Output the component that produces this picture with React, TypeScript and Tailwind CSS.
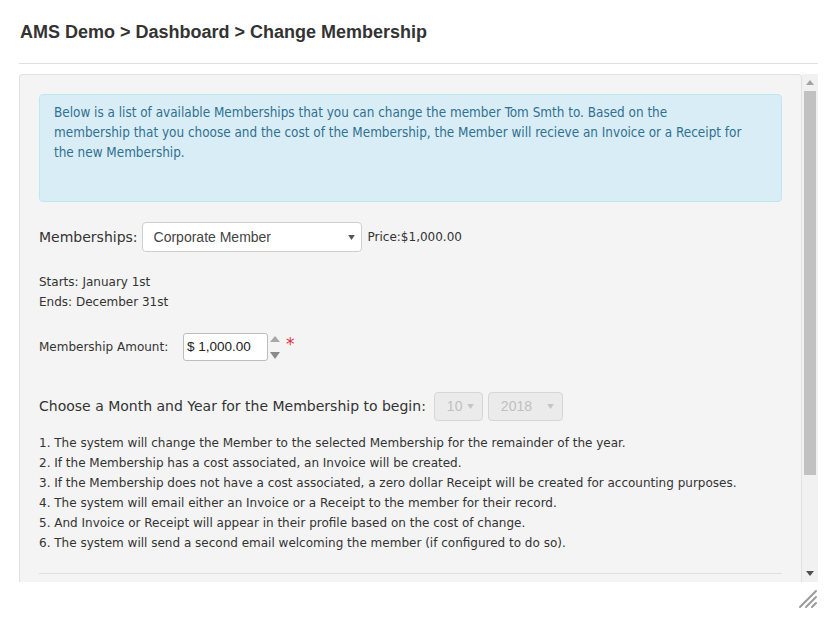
const listItems = [
  "1. The system will change the Member to the selected Membership for the remainder of the year.",
  "2. If the Membership has a cost associated, an Invoice will be created.",
  "3. If the Membership does not have a cost associated, a zero dollar Receipt will be created for accounting purposes.",
  "4. The system will email either an Invoice or a Receipt to the member for their record.",
  "5. And Invoice or Receipt will appear in their profile based on the cost of change.",
  "6. The system will send a second email welcoming the member (if configured to do so).",
];

function Caret({ className }: { className: string }) {
  return (
    <svg viewBox="0 0 8 6" className={className} fill="currentColor">
      <path d="M0 0h8L4 6z" />
    </svg>
  );
}

function FakeSelect({
  value,
  width,
  disabled,
}: {
  value: string;
  width: string;
  disabled?: boolean;
}) {
  return (
    <div
      className={`${width} flex items-center justify-between rounded-[4px] border ${
        disabled
          ? "h-[29px] border-[#d6d6d6] bg-[#ebebeb] pl-[12px] pr-[8px] text-[#c0c0c0]"
          : "h-[30px] border-[#cfcfcf] bg-white pl-[11px] pr-[6px] text-[#444]"
      } font-['Liberation_Sans',Arial,sans-serif] text-[14px]`}
    >
      <span>{value}</span>
      <Caret className={`h-[5px] w-[7px] ${disabled ? "text-[#c4c4c4]" : "text-[#555]"}`} />
    </div>
  );
}

function Scrollbar() {
  return (
    <div className="flex w-[16px] flex-col bg-[#f1f1f1]">
      <div className="flex h-[17px] items-center justify-center">
        <svg viewBox="0 0 8 5" className="h-[5px] w-[8px] text-[#a3a3a3]" fill="currentColor">
          <path d="M4 0l4 5H0z" />
        </svg>
      </div>
      <div className="mx-[2px] h-[384px] bg-[#c1c1c1]" />
      <div className="flex-1" />
      <div className="flex h-[17px] items-center justify-center">
        <svg viewBox="0 0 8 5" className="h-[5px] w-[8px] text-[#505050]" fill="currentColor">
          <path d="M0 0h8L4 5z" />
        </svg>
      </div>
    </div>
  );
}

export default function App() {
  return (
    <div className="min-h-[632px] bg-white px-[19px] pt-[20px] font-['DejaVu_Sans',Verdana,sans-serif] text-[#333]">
      <h1 className="pl-[1px] font-['Liberation_Sans',Arial,sans-serif] text-[18px] font-bold leading-[24px] text-[#333]">
        AMS Demo &gt; Dashboard &gt; Change Membership
      </h1>
      <div className="mt-[19px] h-px bg-[#e0e0e0]" />

      <div className="mt-[10px] flex h-[508px] w-[799px]">
        <div className="flex-1 overflow-hidden rounded-t-[4px] border border-b-0 border-[#e1e1e1] bg-[#f4f4f4] px-[19px] pt-[19px]">
          <div className="h-[108px] rounded-[4px] border border-[#bce8f1] bg-[#d9edf7] px-[14px] pt-[8px] font-['DejaVu_Sans_Condensed','DejaVu_Sans',sans-serif] text-[13.4px] leading-[20px] text-[#31708f]">
            Below is a list of available Memberships that you can change the member Tom Smth to. Based on the
            <br />
            membership that you choose and the cost of the Membership, the Member will recieve an Invoice or a Receipt for
            <br />
            the new Membership.
          </div>

          <div className="mt-[20px] flex items-center">
            <span className="text-[14px]">Memberships:</span>
            <div className="ml-[4px]">
              <FakeSelect value="Corporate Member" width="w-[220px]" />
            </div>
            <span className="ml-[6px] text-[12px]">Price:$1,000.00</span>
          </div>

          <div className="mt-[20px] text-[12px] leading-[20px]">
            <div>Starts: January 1st</div>
            <div>Ends: December 31st</div>
          </div>

          <div className="mt-[21px] flex items-center">
            <span className="w-[144px] text-[12px]">Membership Amount:</span>
            <div className="flex h-[28px] w-[85px] items-center rounded-[3px] border border-[#bdbdbd] bg-white pl-[3px] font-['Liberation_Sans',Arial,sans-serif] text-[13.5px] text-[#222]">
              $ 1,000.00
            </div>
            <svg viewBox="0 0 12 26" className="ml-[1px] h-[26px] w-[12px]">
              <path d="M6 2l5 6H1z" fill="#a8a8a8" />
              <path d="M1 18h10l-5 7z" fill="#8a8a8a" />
            </svg>
            <span className="mb-[6px] ml-[5px] text-[17px] leading-none text-[#e0314b]">*</span>
          </div>

          <div className="mt-[31px] flex items-center">
            <span className="text-[14px]">Choose a Month and Year for the Membership to begin:</span>
            <div className="ml-[8px]">
              <FakeSelect value="10" width="w-[49px]" disabled />
            </div>
            <div className="ml-[5px]">
              <FakeSelect value="2018" width="w-[75px]" disabled />
            </div>
          </div>

          <div className="mt-[12px] text-[12px] leading-[20px]">
            {listItems.map((item) => (
              <div key={item}>{item}</div>
            ))}
          </div>

          <div className="mt-[20px] h-px bg-[#e0e0e0]" />
        </div>
        <Scrollbar />
      </div>

      <div className="mt-[7px] flex w-[799px] justify-end">
        <svg viewBox="0 0 20 20" className="h-[20px] w-[20px]" stroke="#9a9a9a" strokeWidth="2" strokeLinecap="round">
          <path d="M2 18L18 2" />
          <path d="M8 18L18 8" />
          <path d="M14 18L18 14" />
        </svg>
      </div>
    </div>
  );
}
